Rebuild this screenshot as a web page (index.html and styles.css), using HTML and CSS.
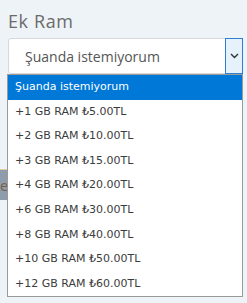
FILE: index.html
```html
<!DOCTYPE html>
<html lang="tr">
<head>
  <meta charset="UTF-8">
  <meta name="viewport" content="width=device-width, initial-scale=1.0">
  <title>Ek Ram</title>
  <link rel="stylesheet" href="styles.css">
</head>
<body>
  <div class="field">
    <label class="field-label">Ek Ram</label>
    <div class="select">
      <span class="select-value">Şuanda istemiyorum</span>
      <span class="select-arrow">
        <svg width="9" height="6" viewBox="0 0 9 6"><path d="M1 1l3.5 3.5L8 1" fill="none" stroke="#333" stroke-width="1.4"/></svg>
      </span>
      <ul class="options">
        <li class="selected">Şuanda istemiyorum</li>
        <li>+1 GB RAM ₺5.00TL</li>
        <li>+2 GB RAM ₺10.00TL</li>
        <li>+3 GB RAM ₺15.00TL</li>
        <li>+4 GB RAM ₺20.00TL</li>
        <li>+6 GB RAM ₺30.00TL</li>
        <li>+8 GB RAM ₺40.00TL</li>
        <li>+10 GB RAM ₺50.00TL</li>
        <li>+12 GB RAM ₺60.00TL</li>
      </ul>
    </div>
  </div>

  <div class="below">
    <button class="btn">e</button>
    <div class="below-field"></div>
  </div>
</body>
</html>
```

FILE: styles.css
```css
body {
  margin: 0;
  padding: 10px 4px 0 8px;
  background: #eef3f7;
  font-family: "Open Sans", sans-serif;
  height: 303px;
  box-sizing: border-box;
  overflow: hidden;
}

.field-label {
  display: block;
  font-size: 18px;
  letter-spacing: 0.6px;
  color: #6b6b6b;
  line-height: 22px;
  margin-bottom: 6px;
}

.select {
  position: relative;
  height: 36px;
  background: #fff;
  border: 1px solid #d5d9dd;
  border-radius: 3px;
  display: flex;
  align-items: center;
  box-sizing: border-box;
}

.select-value {
  flex: 1;
  padding-left: 16px;
  font-size: 14px;
  color: #555;
}

.select-arrow {
  width: 16px;
  height: 34px;
  margin-right: -1px;
  margin-top: -1px;
  align-self: flex-start;
  background: #e5f1fb;
  border: 1px solid #2f7fd0;
  display: flex;
  align-items: center;
  justify-content: center;
}

.options {
  position: absolute;
  top: 35px;
  left: -2px;
  right: -1px;
  margin: 0;
  padding: 0;
  list-style: none;
  background: #fff;
  border: 1px solid #9a9a9a;
  font-family: "DejaVu Sans", sans-serif;
  font-size: 11px;
  color: #3c3c3c;
  z-index: 2;
}

.options li {
  height: 24.6px;
  line-height: 24px;
  padding-left: 7px;
}

.options li.selected {
  background: #0078d7;
  color: #fff;
}

.below {
  margin: 95px 0 0 -8px;
  display: flex;
}

.below-field {
  flex: 1;
}

.btn {
  width: 120px;
  height: 31px;
  padding: 0 0 0 0;
  border: none;
  border-top: 1px solid #e9c79c;
  background: #8d9dac;
  color: #7a5f4a;
  font-family: "Open Sans", sans-serif;
  font-size: 15px;
  text-align: left;
}
```
